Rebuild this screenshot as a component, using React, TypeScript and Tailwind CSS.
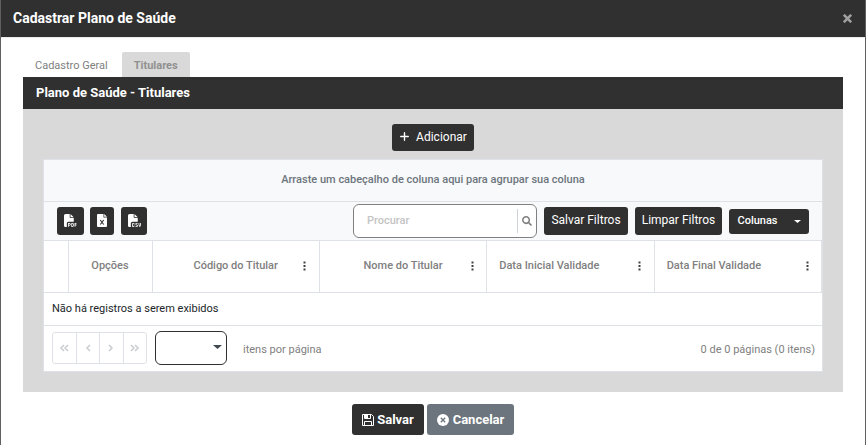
import React from 'react';
import { FaFileCsv, FaFilePdf, FaPlus } from 'react-icons/fa6';
import { FaSearch } from 'react-icons/fa';

interface Column {
  title: string;
  width: string;
  align: string;
  menu?: boolean;
}

const columns: Column[] = [
  { title: '', width: 'w-[24px]', align: 'text-center' },
  { title: 'Opções', width: 'w-[84px]', align: 'text-center' },
  { title: 'Código do Titular', width: '', align: 'text-center', menu: true },
  { title: 'Nome do Titular', width: '', align: 'text-center', menu: true },
  { title: 'Data Inicial Validade', width: '', align: 'pl-3 text-left', menu: true },
  { title: 'Data Final Validade', width: '', align: 'pl-3 text-left', menu: true },
];

const pagerButtons = [
  { label: 'Primeira página', path: 'M5 1 2 4l3 3M9 1 6 4l3 3' },
  { label: 'Página anterior', path: 'M7 1 4 4l3 3' },
  { label: 'Próxima página', path: 'M3 1l3 3-3 3' },
  { label: 'Última página', path: 'M1 1l3 3-3 3M5 1l3 3-3 3' },
];

const SaveIcon: React.FC = () => (
  <svg className="size-3" viewBox="0 0 12 12" fill="none" stroke="currentColor" aria-hidden="true">
    <path d="M.5.5h9l2 2v9H.5z" />
    <path d="M2.5 11.5v-4h7v4M2.5.5v4h6v-4" />
    <path d="M3 1h3v3H3z" fill="currentColor" stroke="none" />
  </svg>
);

const CancelIcon: React.FC = () => (
  <svg className="size-3" viewBox="0 0 12 12" aria-hidden="true">
    <circle cx="6" cy="6" r="6" fill="currentColor" />
    <path d="M3.8 3.8l4.4 4.4M8.2 3.8 3.8 8.2" stroke="#6c757d" strokeWidth="1.3" />
  </svg>
);

const ExcelIcon: React.FC = () => (
  <svg className="h-[13px] w-[10px]" viewBox="0 0 10 13" aria-hidden="true">
    <path d="M1 0h5.5v3.5H10V12a1 1 0 0 1-1 1H1a1 1 0 0 1-1-1V1a1 1 0 0 1 1-1zM7.2 0 10 2.8H7.2z" fill="currentColor" />
    <path d="M3.3 6l3.4 4.5M6.7 6 3.3 10.5" stroke="#303030" strokeWidth="1.1" />
  </svg>
);

const Caret: React.FC<{ className?: string }> = ({ className }) => (
  <svg className={className} viewBox="0 0 8 4" preserveAspectRatio="none" fill="currentColor" aria-hidden="true">
    <path d="M0 0h8L4 4z" />
  </svg>
);

const DarkButton: React.FC<React.ButtonHTMLAttributes<HTMLButtonElement>> = ({ className = '', ...props }) => (
  <button
    type="button"
    className={`flex items-center justify-center rounded-[3px] bg-[#303030] text-white ${className}`}
    {...props}
  />
);

const Toolbar: React.FC = () => (
  <div className="flex h-[39px] items-center border-b border-[#dee2e6] bg-[#f8f9fa] px-[13px]">
    <div className="flex gap-[6px]">
      <DarkButton className="h-7 w-[27px] pb-[2px]" aria-label="Exportar PDF">
        <FaFilePdf className="size-[13px]" />
      </DarkButton>
      <DarkButton className="h-7 w-6 pb-[2px]" aria-label="Exportar Excel">
        <ExcelIcon />
      </DarkButton>
      <DarkButton className="ml-px h-7 w-[26px] pb-[2px]" aria-label="Exportar CSV">
        <FaFileCsv className="size-[13px]" />
      </DarkButton>
    </div>
    <div className="ml-auto flex items-center gap-[7px]">
      <div className="flex h-[34px] w-[184px] items-center rounded-[6px] border border-[#808080] bg-white">
        <input
          type="text"
          aria-label="Procurar"
          placeholder="Procurar"
          className="min-w-0 flex-1 pl-[13px] text-[11px] font-medium outline-none placeholder:text-[#c4c4c4]"
        />
        <button type="button" aria-label="Buscar" className="flex h-6 w-[19px] items-center justify-center border-l border-[#ced4da] text-[#808080]">
          <FaSearch className="size-[10px]" />
        </button>
      </div>
      <DarkButton className="h-7 w-[84px] pb-[2px] text-[12px]">Salvar Filtros</DarkButton>
      <DarkButton className="h-7 w-[87px] pb-[2px] text-[12px]">Limpar Filtros</DarkButton>
      <DarkButton className="h-[25px] w-[80px] gap-4 text-[11px] font-medium">
        Colunas
        <Caret className="h-[3px] w-[7px] shrink-0" />
      </DarkButton>
    </div>
  </div>
);

const TitularesTable: React.FC = () => (
  <table className="w-full table-fixed border-collapse text-[11px]">
    <thead>
      <tr className="h-[51px] border-b border-[#dee2e6] text-[#808080]">
        {columns.map((column, index) => (
          <th key={index} className={`relative border-r border-[#dee2e6] p-0 font-medium ${column.width} ${column.align}`}>
            {column.title}
            {column.menu && (
              <button type="button" aria-label={`Menu de ${column.title}`} className="absolute inset-y-0 right-0 flex w-7 items-center justify-center text-[#404040]">
                <svg className="h-[10px] w-[3px]" viewBox="0 0 3 10" fill="currentColor" aria-hidden="true">
                  <path d="M.5.5h2v2h-2zM.5 4h2v2h-2zM.5 7.5h2v2h-2z" />
                </svg>
              </button>
            )}
          </th>
        ))}
      </tr>
    </thead>
    <tbody>
      <tr className="h-[33px] border-b border-[#dee2e6] text-[#212529]">
        <td colSpan={6} className="p-0 pt-[2px] pl-2">Não há registros a serem exibidos</td>
      </tr>
    </tbody>
  </table>
);

const Pager: React.FC = () => (
  <div className="flex h-[45px] items-center pr-[7px] pl-2 text-[11px] text-[#808080]">
    <div className="flex h-8 w-[95px] divide-x divide-[#dee2e6] rounded-[3px] border border-[#dee2e6]">
      {pagerButtons.map((button) => (
        <button key={button.label} type="button" disabled aria-label={button.label} className="flex flex-1 items-center justify-center text-[#c8cdd2]">
          <svg className="h-2 w-[10px]" viewBox="0 0 10 8" fill="none" stroke="currentColor" strokeWidth="1.5" aria-hidden="true">
            <path d={button.path} />
          </svg>
        </button>
      ))}
    </div>
    <div className="relative ml-2">
      <select id="page-size" className="block h-[34px] w-[72px] appearance-none rounded-[6px] border border-[#303030] bg-white">
        <option value=""></option>
      </select>
      <Caret className="pointer-events-none absolute top-[14px] right-[5px] h-[4px] w-[9px] text-[#404850]" />
    </div>
    <label htmlFor="page-size" className="ml-4 pt-1">itens por página</label>
    <span className="ml-auto pt-1">0 de 0 páginas (0 itens)</span>
  </div>
);

const App: React.FC = () => {
  return (
    <div className="min-h-screen border-x border-[#606060] bg-white font-['Roboto',sans-serif]">
      <header className="flex h-[38px] items-center justify-between border-b border-[#e9ecef] bg-[#303030] pr-[13px] pl-3">
        <h1 className="text-[14px] font-bold text-white">Cadastrar Plano de Saúde</h1>
        <button type="button" aria-label="Fechar" className="text-[#a0a0a0]">
          <svg className="size-[9px]" viewBox="0 0 9 9" fill="none" stroke="currentColor" strokeWidth="2.6" aria-hidden="true">
            <path d="M.8.8l7.4 7.4M8.2.8.8 8.2" />
          </svg>
        </button>
      </header>

      <main className="px-[22px] pt-[14px]">
        <nav className="flex h-[25px] gap-[2px] text-[11px] text-[#808080]">
          <button type="button" className="px-3 pt-[3px]">Cadastro Geral</button>
          <button type="button" className="rounded-t-[2px] bg-[#d9d9d9] px-3 pt-[3px] font-bold text-[#909090]">Titulares</button>
        </nav>

        <section className="bg-[#d9d9d9] pb-5">
          <h2 className="flex h-8 items-center bg-[#303030] px-[13px] text-[13px] font-bold text-white">
            Plano de Saúde - Titulares
          </h2>
          <div className="flex justify-center pt-[15px] pb-2">
            <DarkButton className="h-[27px] w-[82px] gap-[6px] pb-[2px] text-[12px]">
              <FaPlus className="size-[11px]" />
              Adicionar
            </DarkButton>
          </div>

          <div className="mx-5 border border-[#dee2e6] bg-white">
            <div className="flex h-[42px] items-center justify-center border-b border-[#dee2e6] bg-[#f8f9fa] text-[11px] font-medium text-[#6c757d]">
              Arraste um cabeçalho de coluna aqui para agrupar sua coluna
            </div>
            <Toolbar />
            <TitularesTable />
            <Pager />
          </div>
        </section>
      </main>

      <footer className="flex justify-center gap-[3px] pt-3 text-[13px] font-bold text-white">
        <DarkButton className="h-[31px] w-[72px] gap-[3px] pt-px">
          <span className="pt-px"><SaveIcon /></span>
          Salvar
        </DarkButton>
        <button type="button" className="flex h-[31px] w-[87px] items-center justify-center gap-1 rounded-[3px] bg-[#6c757d] pt-px">
          <span className="pt-px"><CancelIcon /></span>
          Cancelar
        </button>
      </footer>
    </div>
  );
};

export default App;
